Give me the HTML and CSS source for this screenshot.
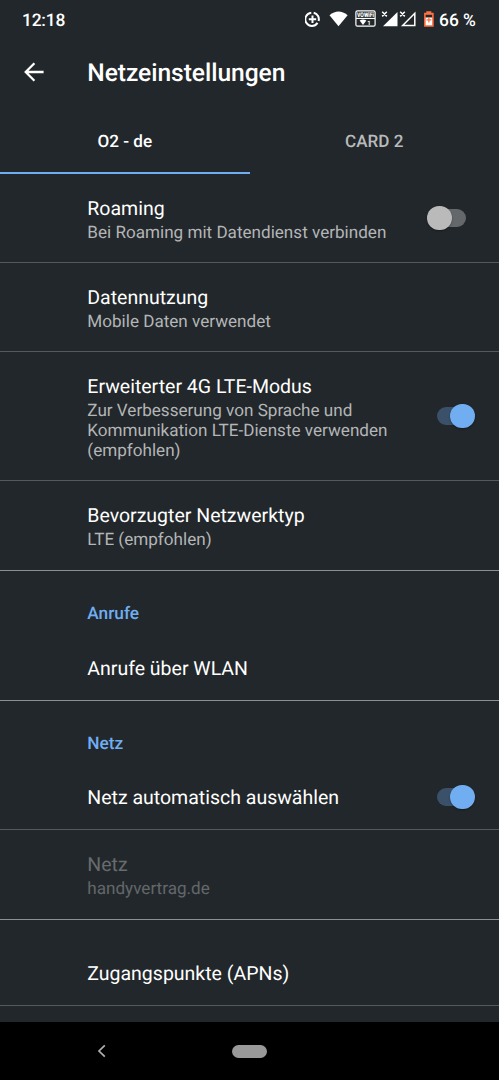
FILE: index.html
```html
<!DOCTYPE html>
<html lang="de">
<head>
<meta charset="utf-8">
<title>Netzeinstellungen</title>
<link rel="stylesheet" href="styles.css">
</head>
<body>
<div class="screen">
  <header class="status">
    <span class="clock">12:18</span>
    <svg class="status-icons" width="130" height="24" viewBox="305 7 130 24">
      <g fill="none" stroke="#fff" stroke-width="2">
        <path d="M311.3 12.8a6.6 6.6 0 1 0 6.2 10.1M313.7 12.8a6.6 6.6 0 0 1 4.9 8.2"/>
        <path d="M312.5 15.6v7.4M308.8 19.3h7.4"/>
      </g>
      <path fill="#fff" d="M329.5 15.2Q338.5 7.7 347.6 15.2L338.5 26.2Z"/>
      <rect x="355.9" y="10.8" width="19.2" height="15.4" rx="1.5" fill="#22272b" stroke="#fff" stroke-width="1.2"/>
      <path fill="#fff" d="M356 17.9h19v1.1h-19z"/>
      <text class="vowifi" x="357" y="17" textLength="17" lengthAdjust="spacingAndGlyphs">VOWiFi</text>
      <path fill="#fff" d="M359.6 20.6q3.4-2.2 6.8 0L363 25z"/>
      <text class="sim-number" x="367.2" y="25">1</text>
      <path fill="#fff" d="M397.5 12v14.2H383z"/>
      <path fill="#22272b" d="M381 9h7v8.5h-7z"/>
      <path fill="none" stroke="#fff" stroke-width="1.5" d="M382.2 11.8l4.6 4.6M386.8 11.8l-4.6 4.6M400.2 11.8l4.6 4.6M404.8 11.8l-4.6 4.6M414.8 13.3v12.1h-12.1z"/>
      <path fill="#ff7043" d="M426.3 11.2h5v1.6h2.4v14h-9.6v-14h2.2z"/>
      <path fill="#22272b" d="M425.7 14.8h6.4v2.8h-6.4z"/>
      <path fill="#fff" d="M425.7 17.6h6.4v7.6h-6.4z"/>
      <path fill="none" stroke="#ff7043" stroke-width="1.3" d="M428.9 17.4v5M426.4 19.9h5"/>
    </svg>
    <span class="battery">66 %</span>
  </header>
  <div class="appbar">
    <svg class="back" width="20" height="20" viewBox="0 0 20 20"><path d="M19.6 10H2M10.4 1.2 1.7 10l8.7 8.8"/></svg>
    <h1 class="heading">Netzeinstellungen</h1>
  </div>
  <nav class="tabs">
    <div class="tab tab-active">O2 - de</div>
    <div class="tab">CARD 2</div>
  </nav>
  <main class="list">
    <section class="row row-double">
      <div class="copy"><div class="title">Roaming</div><div class="summary">Bei Roaming mit Datendienst verbinden</div></div>
      <span class="switch"></span>
    </section>
    <section class="row row-double">
      <div class="copy"><div class="title">Datennutzung</div><div class="summary">Mobile Daten verwendet</div></div>
    </section>
    <section class="row row-tall">
      <div class="copy"><div class="title">Erweiterter 4G LTE-Modus</div><div class="summary">Zur Verbesserung von Sprache und<br>Kommunikation LTE-Dienste verwenden<br>(empfohlen)</div></div>
      <span class="switch switch-on"></span>
    </section>
    <section class="row row-double row-last">
      <div class="copy"><div class="title">Bevorzugter Netzwerktyp</div><div class="summary">LTE (empfohlen)</div></div>
    </section>
    <h2 class="category">Anrufe</h2>
    <section class="row row-single row-last">
      <div class="copy"><div class="title">Anrufe über WLAN</div></div>
    </section>
    <h2 class="category category-netz">Netz</h2>
    <section class="row row-single">
      <div class="copy"><div class="title">Netz automatisch auswählen</div></div>
      <span class="switch switch-on"></span>
    </section>
    <section class="row row-double row-last disabled">
      <div class="copy"><div class="title">Netz</div><div class="summary">handyvertrag.de</div></div>
    </section>
    <section class="row row-single row-spaced">
      <div class="copy"><div class="title">Zugangspunkte (APNs)</div></div>
    </section>
  </main>
  <footer class="navbar">
    <svg class="nav-back" width="9" height="14" viewBox="0 0 9 14"><path d="M7.8 1.3 2 7l5.8 5.7"/></svg>
    <span class="home"></span>
  </footer>
</div>
</body>
</html>
```
FILE: styles.css
```css
* { box-sizing: border-box; }
body { margin: 0; background: #22272b; color: #fff; font-family: Roboto, sans-serif; text-rendering: geometricPrecision; }
.screen { width: 499px; height: 1080px; display: flex; flex-direction: column; overflow: hidden; }
.status { height: 40px; flex: none; display: flex; align-items: center; padding: 0 24px 0 22px; font-size: 17.4px; font-weight: 500; }
.clock { padding-top: 1px; letter-spacing: -0.2px; }
.status-icons { margin-left: auto; margin-top: -2px; }
.vowifi { font: 900 6.5px Roboto, sans-serif; fill: #fff; }
.sim-number { font: 700 6px Roboto, sans-serif; fill: #fff; }
.battery { width: 36px; margin-left: 4px; padding-top: 1px; white-space: nowrap; }
.appbar { height: 66px; flex: none; display: flex; align-items: center; padding-left: 24px; }
.back { margin-top: -2px; fill: none; stroke: #fff; stroke-width: 2.3; }
.heading { margin: 2px 0 0 43.3px; font-size: 24.6px; font-weight: 500; line-height: 30px; letter-spacing: -0.05px; }
.tabs { height: 68px; flex: none; display: flex; }
.tab { flex: 1; display: flex; align-items: center; justify-content: center; padding-top: 5px; border-bottom: 2px solid transparent; font-size: 17.1px; font-weight: 500; color: #b8babb; }
.tab-active { color: #fff; border-color: #70aef1; }
.list { flex: 1; min-height: 0; overflow: hidden; }
.row { display: flex; align-items: center; justify-content: space-between; padding: 0 24px 0 87.3px; border-bottom: 1px solid #54595b; }
.row-double { height: 89px; }
.row-tall { height: 129px; }
.row-single { height: 65px; }
.row-last { border-color: #8b9092; }
.row-double.row-last { height: 90px; }
.row-spaced { height: 86px; padding-top: 22px; }
.title { font-size: 19.5px; line-height: 25px; white-space: nowrap; }
.summary { padding-top: 2px; margin-bottom: -2px; font-size: 17.1px; line-height: 20px; color: #b3b5b6; white-space: nowrap; }
.disabled { padding-bottom: 1px; }
.disabled .title { color: #676b6e; }
.disabled .summary { color: #63676a; }
.category { height: 65px; margin: 0; padding: 21px 0 0 87.3px; font-size: 17.3px; font-weight: 500; line-height: 44px; color: #70aef1; }
.category-netz { height: 64px; }
.switch { position: relative; flex: none; width: 39px; height: 25px; margin-right: 9px; }
.switch::before { content: ""; position: absolute; left: 10px; top: 3px; width: 29px; height: 18px; border-radius: 9px; background: #64686b; }
.switch::after { content: ""; position: absolute; left: 0; top: 0; width: 24.6px; height: 24.6px; border-radius: 50%; background: #bababa; box-shadow: 0 1px 2px #0005; }
.switch-on { margin-right: -0.6px; }
.switch-on::before { left: 0; background: #3a5169; }
.switch-on::after { left: 13.8px; background: #70aef1; }
.navbar { height: 58px; flex: none; display: flex; align-items: center; background: #000; padding-left: 97px; }
.nav-back { fill: none; stroke: #b0b0b0; stroke-width: 1.7; }
.home { width: 35px; height: 13px; margin-left: 126px; border-radius: 7px; background: #999; }
```
